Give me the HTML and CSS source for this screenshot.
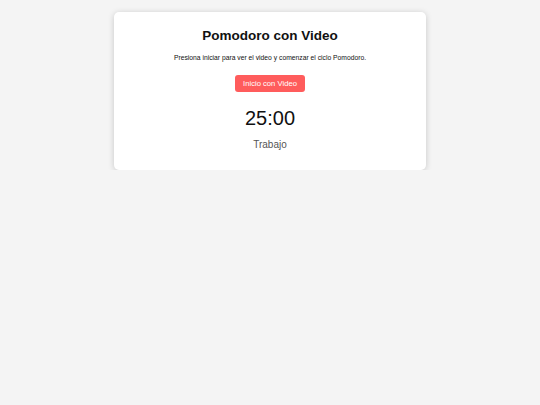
FILE: index.html
```html
<!DOCTYPE html>
<html>
<head>
    <meta charset="utf-8">
    <title>Pomodoro con Video</title>
    <link rel="stylesheet" href="styles.css">
</head>
<body>
    <div class="container">
        <h1>Pomodoro con Video</h1>
        <p class="intro">Presiona iniciar para ver el video y comenzar el ciclo Pomodoro.</p>
        <button class="start-btn">Inicio con Video</button>
        <div class="timer">25:00</div>
        <div class="status">Trabajo</div>
    </div>
</body>
</html>
```

FILE: styles.css
```css
/* base */
body {
    margin: 0;
    padding-top: 12px;
    display: flex;
    flex-direction: column;
    align-items: center;
    background-color: #f4f4f4;
    font-family: "Liberation Sans", Arial, sans-serif;
}

.container {
    width: 312px;
    box-sizing: border-box;
    padding: 16px 20px 19px;
    background: #fff;
    border-radius: 5px;
    box-shadow: 0 1px 6px rgba(0, 0, 0, 0.18);
    display: flex;
    flex-direction: column;
    align-items: center;
    text-align: center;
}

h1 {
    margin: 0 0 8.5px;
    font-size: 13.5px;
    line-height: 16px;
    color: #111;
}

.intro {
    margin: 0 0 13.5px;
    font-size: 6.75px;
    line-height: 9px;
    color: #111;
}

.start-btn {
    padding: 4.5px 8px;
    border: none;
    border-radius: 3px;
    background: #ff5c5c;
    color: #fff;
    font-family: inherit;
    font-size: 7.65px;
    line-height: 8px;
    cursor: pointer;
}

.timer {
    margin-top: 14px;
    font-size: 20px;
    line-height: 24px;
    color: #111;
}

.status {
    margin-top: 9px;
    font-size: 10px;
    line-height: 12px;
    color: #555;
}
```
